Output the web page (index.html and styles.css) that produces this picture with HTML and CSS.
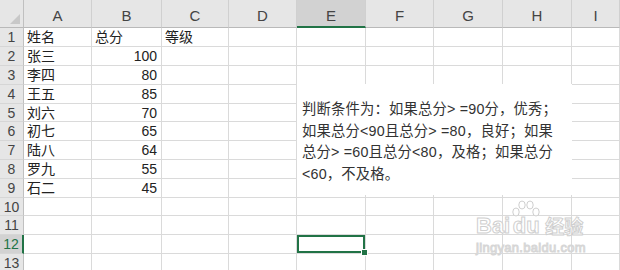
FILE: index.html
```html
<!DOCTYPE html>
<html lang="zh-CN">
<head>
  <meta charset="UTF-8" />
  <title>成绩等级</title>
  <link rel="stylesheet" href="styles.css">
</head>
<body>
  <div class="sheet-wrap">
    <!-- Worksheet grid: row header + columns A to I -->
    <div class="sheet">
      <div class="hd corner"></div>
      <div class="hd col">A</div><div class="hd col">B</div><div class="hd col">C</div><div class="hd col">D</div><div class="hd col active">E</div><div class="hd col">F</div><div class="hd col">G</div><div class="hd col">H</div><div class="hd col">I</div>

      <div class="rh">1</div><div class="c">姓名</div><div class="c">总分</div><div class="c">等级</div><div class="c"></div><div class="c"></div><div class="c"></div><div class="c"></div><div class="c"></div><div class="c"></div>
      <div class="rh">2</div><div class="c">张三</div><div class="c num">100</div><div class="c"></div><div class="c"></div><div class="c"></div><div class="c"></div><div class="c"></div><div class="c"></div><div class="c"></div>
      <div class="rh">3</div><div class="c">李四</div><div class="c num">80</div><div class="c"></div><div class="c"></div><div class="c"></div><div class="c"></div><div class="c"></div><div class="c"></div><div class="c"></div>
      <div class="rh">4</div><div class="c">王五</div><div class="c num">85</div><div class="c"></div><div class="c"></div><div class="c"></div><div class="c"></div><div class="c"></div><div class="c"></div><div class="c"></div>
      <div class="rh">5</div><div class="c">刘六</div><div class="c num">70</div><div class="c"></div><div class="c"></div><div class="c"></div><div class="c"></div><div class="c"></div><div class="c"></div><div class="c"></div>
      <div class="rh">6</div><div class="c">初七</div><div class="c num">65</div><div class="c"></div><div class="c"></div><div class="c"></div><div class="c"></div><div class="c"></div><div class="c"></div><div class="c"></div>
      <div class="rh">7</div><div class="c">陆八</div><div class="c num">64</div><div class="c"></div><div class="c"></div><div class="c"></div><div class="c"></div><div class="c"></div><div class="c"></div><div class="c"></div>
      <div class="rh">8</div><div class="c">罗九</div><div class="c num">55</div><div class="c"></div><div class="c"></div><div class="c"></div><div class="c"></div><div class="c"></div><div class="c"></div><div class="c"></div>
      <div class="rh">9</div><div class="c">石二</div><div class="c num">45</div><div class="c"></div><div class="c"></div><div class="c"></div><div class="c"></div><div class="c"></div><div class="c"></div><div class="c"></div>
      <div class="rh">10</div><div class="c"></div><div class="c"></div><div class="c"></div><div class="c"></div><div class="c"></div><div class="c"></div><div class="c"></div><div class="c"></div><div class="c"></div>
      <div class="rh">11</div><div class="c"></div><div class="c"></div><div class="c"></div><div class="c"></div><div class="c"></div><div class="c"></div><div class="c"></div><div class="c"></div><div class="c"></div>
      <div class="rh active">12</div><div class="c"></div><div class="c"></div><div class="c"></div><div class="c"></div><div class="c sel"></div><div class="c"></div><div class="c"></div><div class="c"></div><div class="c"></div>
      <div class="rh">13</div><div class="c"></div><div class="c"></div><div class="c"></div><div class="c"></div><div class="c"></div><div class="c"></div><div class="c"></div><div class="c"></div><div class="c"></div>
    </div>

    <!-- Floating text box over E4:H9 -->
    <div class="note">
      判断条件为：如果总分&gt; =90分，优秀；<br>
      如果总分&lt;90且总分&gt; =80，良好；如果<br>
      总分&gt; =60且总分&lt;80，及格；如果总分<br>
      &lt;60，不及格。
    </div>

    <!-- Watermark -->
    <div class="mark">
      <div class="mark-logo">
        <span class="mark-bai">Bai</span>
        <span class="mark-paw">
          <svg width="30" height="18" viewBox="0 0 30 18">
            <ellipse cx="5" cy="12" rx="3.2" ry="4" />
            <ellipse cx="11" cy="5" rx="3.2" ry="4" />
            <ellipse cx="19" cy="5" rx="3.2" ry="4" />
            <ellipse cx="25" cy="12" rx="3.2" ry="4" />
          </svg>
          <span class="mark-du">du</span>
        </span>
        <span class="mark-jy">经验</span>
      </div>
      <div class="mark-url">jingyan.baidu.com</div>
    </div>
  </div>
</body>
</html>
```

FILE: styles.css
```css
/* Page reset */
body {
  margin: 0;
  background-color: #ffffff;
  font-family: "Liberation Sans", "Noto Sans CJK SC", sans-serif;
}
.sheet-wrap {
  position: relative;
  width: 620px;
  height: 270px;
  overflow: hidden;
}
/* Spreadsheet grid */
.sheet {
  display: grid;
  grid-template-columns: 24px 68px 70px 67px 68px 69px 68px 69px 69px 1fr;
  grid-template-rows: 28px 19px 19px 19px 19px 18px 19px 19px 19px 19px 18px 19px 19px 19px;
}
.sheet > div {
  box-sizing: border-box;
}
/* Column headers */
.hd {
  background-color: #e6e6e6;
  border-right: 1px solid #d0d0d0;
  border-bottom: 1px solid #b9b9b9;
  color: #444;
  font-size: 15px;
  text-align: center;
  padding-top: 7px;
}
.hd.active {
  background-color: #d2d2d2;
  border-bottom: 2px solid #217346;
}
.corner {
  position: relative;
  border-right: 1px solid #c0c0c0;
}
.corner::after {
  content: "";
  position: absolute;
  right: 3px;
  bottom: 3px;
  width: 10px;
  height: 10px;
  background-color: #c8c8c8;
  clip-path: polygon(100% 0, 100% 100%, 0 100%);
}
/* Row headers */
.rh {
  background-color: #e6e6e6;
  border-right: 1px solid #c0c0c0;
  border-bottom: 1px solid #d6d6d6;
  color: #444;
  font-size: 14px;
  line-height: 18px;
  text-align: center;
}
.rh.active {
  background-color: #d2d2d2;
  border-right: 2px solid #217346;
  color: #217346;
}
/* Cells */
.c {
  border-right: 1px solid #dadada;
  border-bottom: 1px solid #dadada;
  color: #222;
  font-size: 14px;
  line-height: 18px;
  padding: 0 3px;
  white-space: nowrap;
}
.c.num {
  text-align: right;
  padding-right: 4px;
}
.c.sel {
  position: relative;
  box-shadow: inset 0 0 0 2px #217346;
}
.c.sel::after {
  content: "";
  position: absolute;
  right: -3px;
  bottom: -3px;
  width: 5px;
  height: 5px;
  background-color: #217346;
  border: 1px solid #fff;
}
/* Floating text box */
.note {
  position: absolute;
  left: 297px;
  top: 84px;
  width: 275px;
  height: 111px;
  box-sizing: border-box;
  background-color: #ffffff;
  padding: 15px 0 0 5px;
  color: #333;
  font-size: 14.3px;
  line-height: 21.5px;
  letter-spacing: 0.2px;
  white-space: nowrap;
}
/* Watermark */
.mark {
  position: absolute;
  left: 476px;
  top: 200px;
  color: #fff;
}
.mark-logo {
  display: flex;
  align-items: flex-end;
}
.mark-bai,
.mark-du {
  font-family: "Liberation Sans", sans-serif;
  font-weight: bold;
  font-size: 22px;
  line-height: 22px;
  -webkit-text-stroke: 1px #cfcfcf;
}
.mark-paw {
  display: flex;
  flex-direction: column;
  align-items: center;
  margin-left: 1px;
}
.mark-paw svg {
  fill: #fff;
  stroke: #cfcfcf;
  stroke-width: 1;
}
.mark-du {
  margin-top: -3px;
}
.mark-jy {
  font-family: "Noto Sans CJK SC", sans-serif;
  font-weight: bold;
  font-size: 19px;
  line-height: 22px;
  margin-left: 4px;
  -webkit-text-stroke: 1px #cfcfcf;
}
.mark-url {
  font-family: "Liberation Sans", sans-serif;
  font-size: 13px;
  margin-top: 3px;
  letter-spacing: 0.3px;
  -webkit-text-stroke: 1px #d6d6d6;
}
```
